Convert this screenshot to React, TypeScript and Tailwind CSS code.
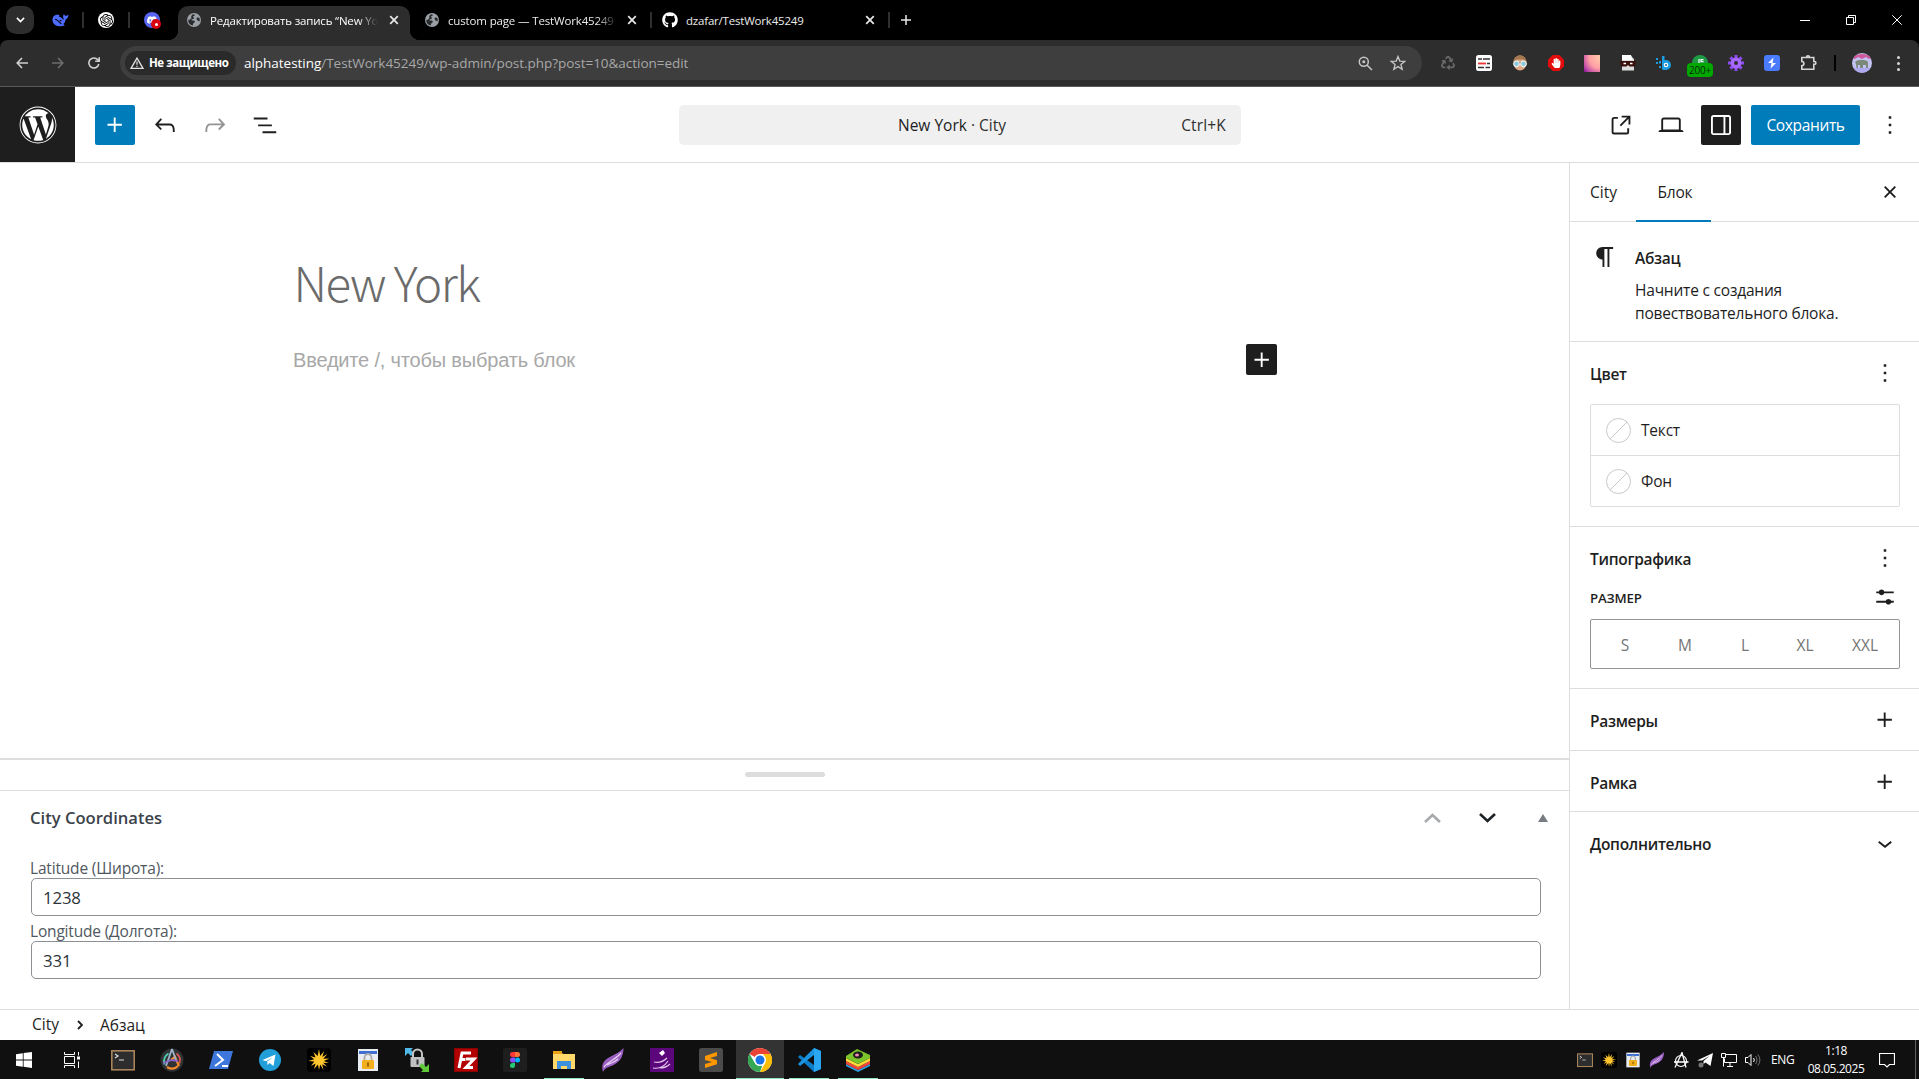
import React from "react";
import { FaGithub, FaWordpress, FaRecycle, FaHandPaper } from "react-icons/fa";
import { SiOpenai, SiDiscord } from "react-icons/si";

const UI = "font-['Open_Sans','Noto_Sans',sans-serif]";

/* ---------- editor icons (24-unit grid drawn at 30px) ---------- */

const WP = {
  plus: "M11 12.5V17.5H12.5V12.5H17.5V11H12.5V6H11V11H6V12.5H11Z",
  undo: "M18.3 11.7c-.6-.6-1.4-.9-2.3-.9H6.7l2.9-3.3-1.1-1-4.5 5L8.5 16l1-1-2.7-2.7H16c.5 0 .9.2 1.3.5 1 1 1 3.4 1 4.5v.3h1.5v-.2c0-1.5 0-4.3-1.5-5.7z",
  redo: "M15.6 6.5l-1.1 1 2.9 3.3H8c-.9 0-1.7.3-2.3.9-1.4 1.5-1.4 4.2-1.4 5.6v.2h1.5v-.3c0-1.1 0-3.5 1-4.5.3-.3.7-.5 1.3-.5h9.2L14.5 15l1.1 1.1 4.6-4.6-4.6-5z",
  list: "M3 6h11v1.5H3V6Zm3.5 5.5h11V13h-11v-1.5ZM21 17H10v1.5h11V17Z",
  external: "M19.5 4.5h-7V6h4.44l-5.97 5.97 1.06 1.06L18 7.06v4.44h1.5v-7Zm-13 1a2 2 0 0 0-2 2v10a2 2 0 0 0 2 2h10a2 2 0 0 0 2-2v-3H17v3a.5.5 0 0 1-.5.5h-10a.5.5 0 0 1-.5-.5v-10a.5.5 0 0 1 .5-.5h3V5.5h-3Z",
  desktop: "M20.5 16h-.7V8c0-1.1-.9-2-2-2H6.2c-1.1 0-2 .9-2 2v8h-.7c-.8 0-1.5.7-1.5 1.5h20c0-.8-.7-1.5-1.5-1.5zM5.7 8c0-.3.2-.5.5-.5h11.6c.3 0 .5.2.5.5v7.6H5.7V8z",
  drawer: "M18 4H6c-1.1 0-2 .9-2 2v12c0 1.1.9 2 2 2h12c1.1 0 2-.9 2-2V6c0-1.1-.9-2-2-2zm-4 14.5H6c-.3 0-.5-.2-.5-.5V6c0-.3.2-.5.5-.5h8v13zm4.5-.5c0 .3-.2.5-.5.5h-2.5v-13H18c.3 0 .5.2.5.5v12z",
  more: "M13 19h-2v-2h2v2zm0-6h-2v-2h2v2zm0-6h-2V5h2v2z",
  paragraph: "m9.99609 14v-.2251l.00391.0001v6.225h1.5v-14.5h2.5v14.5h1.5v-14.5h3v-1.5h-8.50391c-2.76142 0-5 2.23858-5 5 0 2.7614 2.23858 5 5 5z",
  close: "M12 13.06l3.712 3.713 1.061-1.06L13.061 12l3.712-3.712-1.06-1.06L12 10.938 8.288 7.227l-1.061 1.06L10.939 12l-3.712 3.712 1.06 1.061L12 13.061z",
  settings: "m19 7.5h-7.628c-.3089-.87389-1.1423-1.5-2.122-1.5-.97966 0-1.81309.62611-2.12197 1.5h-2.12803v1.5h2.12803c.30888.87389 1.14231 1.5 2.12197 1.5.9797 0 1.8131-.62611 2.122-1.5h7.628zm0 7.5h-2.128c-.3089-.8739-1.1423-1.5-2.122-1.5s-1.8131.6261-2.122 1.5h-7.628v1.5h7.628c.3089.8739 1.1423 1.5 2.122 1.5s1.8131-.6261 2.122-1.5h2.128z",
  chevron: "M17.5 11.6L12 16l-5.5-4.4.9-1.2L12 14l4.5-3.6 1 1.2z",
};

function Wp({ name, className = "" }: { name: keyof typeof WP; className?: string }) {
  return (
    <svg viewBox="0 0 24 24" className={`size-[30px] shrink-0 fill-current ${className}`}>
      <path d={WP[name]} />
    </svg>
  );
}

/* ---------- browser chrome ---------- */

function CloseX() {
  return (
    <svg viewBox="0 0 10 10" className="size-[10px] shrink-0">
      <path d="M1.2 1.2l7.6 7.6M8.8 1.2L1.2 8.8" stroke="#e8e8e8" strokeWidth="1.7" />
    </svg>
  );
}

const Globe = () => (
  <svg viewBox="0 0 14 14" className="size-[14px] shrink-0">
    <circle cx="7" cy="7" r="7" fill="#9aa0a6" />
    <path d="M6.2 1.2c1.2.3 2 .6 1.6 1.4-.6.6-1.6.4-1.8 1.2.2.8 1.2.4 1 1.4-.3.9-1.6.7-2.4 1.2-.6.8.4 1.2 1.4 1.1 1 0 1.8.5 1.9 1.3-.3.9-1.5 1.1-1.8 2.1l-.4 1.7A5.8 5.8 0 0 1 1.300 6.500l1.500.4c.5-1.200 1.400-1.200 1.600-2 .2-1-.6-1.200.1-2.200.4-.7 1-1.200 1.700-1.500zM9.800 4.800c.8-.6 1.900-.4 2.700.3.300 1 .4 2.200 0 3.300-.7-.3-1.300-.2-1.900-.8-.6-.8-1.500-1.800-.8-2.800z" fill="#2a2b2d" />
  </svg>
);

const Sep = ({ className = "" }: { className?: string }) => (
  <div className={`h-4 w-[2px] shrink-0 bg-[#2f2f2f] ${className}`} />
);

function TabStrip() {
  return (
    <div className="flex h-10 items-center bg-black pl-[6px] text-[11.500px] text-[#ececec]">
      <div className="flex size-7 items-center justify-center rounded-[10px] bg-[#2d2d2d]">
        <svg viewBox="0 0 10 6" className="w-[9px]">
          <path d="M1 1l4 4 4-4" fill="none" stroke="#fff" strokeWidth="1.8" />
        </svg>
      </div>
      <svg viewBox="0 0 17 14" className="ml-[18px] h-[14px] w-[17px]">
        <path d="M0.500 7C0.500 3 4 1 7.500 2.200l-.6 1.300c1.800.4 2.800 1.300 3.900 2.800l1.300.2c-1.300-1.500-1.400-3.400-.2-5.400l.9 1.500c1.200.5 2.700.1 3.800-1-.1 2.700-1.200 4.400-3 4.900-.3 2.100-1 3.500-2.300 4.500l1.500 1.600C7 14.500.500 12.500.5 7z" fill="#4d6bfe" />
        <path d="M3 6.200c2.300.2 4.300 2.700 6.300 4.800M7.800 7.300l1.700.8" stroke="#000" strokeWidth="1.100" fill="none" />
      </svg>
      <Sep className="ml-[13px]" />
      <div className="ml-[14px] flex size-4 items-center justify-center rounded-full bg-white">
        <SiOpenai className="size-[13px] text-black" />
      </div>
      <Sep className="ml-[14px]" />
      <div className="relative ml-[14px] flex size-4 items-center justify-center rounded-full bg-[#5865f2]">
        <SiDiscord className="size-[10px] text-white" />
        <div className="absolute -right-[1px] -bottom-[1px] flex size-[10px] items-center justify-center rounded-full bg-[#d9000d]">
          <div className="size-[3px] rounded-full bg-white" />
        </div>
      </div>

      <div className="relative ml-[18px] flex h-[34px] w-[232px] items-center self-end rounded-t-[10px] bg-[#2d2d2d] pl-[9px] before:absolute before:bottom-0 before:-left-[10px] before:size-[10px] before:bg-[radial-gradient(circle_at_0_0,transparent_10px,#2d2d2d_10.500px)] after:absolute after:-right-[10px] after:bottom-0 after:size-[10px] after:bg-[radial-gradient(circle_at_100%_0,transparent_10px,#2d2d2d_10.500px)]">
        <div className="-mt-[6px] flex items-center">
          <Globe />
          <div className="ml-[9px] w-[168px] overflow-hidden pt-px tracking-[-0.180px] whitespace-nowrap text-white [mask-image:linear-gradient(90deg,#000_148px,transparent_168px)]">
            Редактировать запись “New York
          </div>
          <div className="ml-[11px]"><CloseX /></div>
        </div>
      </div>

      <div className="ml-[15px] flex items-center">
        <Globe />
        <div className="ml-[9px] w-[168px] overflow-hidden pt-px tracking-[-0.150px] whitespace-nowrap [mask-image:linear-gradient(90deg,#000_148px,transparent_170px)]">
          custom page — TestWork45249
        </div>
        <div className="ml-[11px]"><CloseX /></div>
      </div>
      <Sep className="ml-[13px]" />
      <FaGithub className="ml-[10px] size-4 text-white" />
      <div className="ml-[8px] w-[179px] pt-px tracking-[-0.200px]">dzafar/TestWork45249</div>
      <CloseX />
      <Sep className="ml-[13px]" />
      <svg viewBox="0 0 10 10" className="ml-[11px] size-[10px]">
        <path d="M5 0v10M0 5h10" stroke="#e8e8e8" strokeWidth="1.500" />
      </svg>

      <div className="ml-auto flex items-center">
        <div className="flex w-[46px] justify-center"><div className="h-px w-[10px] bg-white" /></div>
        <div className="flex w-[46px] justify-center">
          <svg viewBox="0 0 10 10" className="size-[10px]">
            <path d="M.5 2.500h7v7h-7zM2.500 2.500v-2h7v7h-2" fill="none" stroke="#fff" />
          </svg>
        </div>
        <div className="flex w-[45px] justify-center">
          <svg viewBox="0 0 10 10" className="size-[10px]">
            <path d="M.3.3l9.400 9.400M9.700.3L.3 9.700" stroke="#fff" />
          </svg>
        </div>
      </div>
    </div>
  );
}

const Ext = ({ children }: { children: React.ReactNode }) => (
  <div className="relative flex h-5 w-9 shrink-0 items-center justify-center">{children}</div>
);

function Toolbar() {
  return (
    <div className="bg-black">
      <div className="flex h-[47px] items-center rounded-t-[8px] border-b border-[#5a5a5a] bg-[#2d2d2d] pl-1">
        <div className="flex w-9 shrink-0 justify-center">
          <svg viewBox="0 0 12 12" className="size-3"><path d="M12 6H1.200M6 1L1.200 6 6 11" fill="none" stroke="#d0d0d0" strokeWidth="1.600" /></svg>
        </div>
        <div className="flex w-9 shrink-0 justify-center">
          <svg viewBox="0 0 12 12" className="size-3"><path d="M0 6h10.800M6 1l4.800 5L6 11" fill="none" stroke="#6e6e6e" strokeWidth="1.600" /></svg>
        </div>
        <div className="flex w-9 shrink-0 justify-center">
          <svg viewBox="0 0 12 12" className="size-3"><path d="M10.800 7A5 5 0 1 1 9.800 2.800L11 4.200M11.200.3v4H7.200" fill="none" stroke="#d0d0d0" strokeWidth="1.600" /></svg>
        </div>
        <div className="ml-[8px] flex h-[34px] w-[1302px] shrink-0 items-center rounded-full bg-[#3e3e3e] pl-[5px]">
          <div className="flex h-6 w-[111px] shrink-0 items-center rounded-full bg-[#2a2a2a] pl-[5px]">
            <svg viewBox="0 0 14 12" className="h-3 w-[14px] shrink-0">
              <path d="M7 1.100L13 11.300H1z" fill="none" stroke="#e3e3e3" strokeWidth="1.300" />
              <path d="M7 4.500v3.300M7 8.700v1.300" stroke="#e3e3e3" strokeWidth="1.200" />
            </svg>
            <span className="ml-[5px] text-[11.500px] font-bold tracking-[-0.450px] whitespace-nowrap text-white">Не защищено</span>
          </div>
          <div className="ml-[8px] text-[13.500px] tracking-[-0.030px] whitespace-nowrap text-[#a8a8a8]">
            <span className="text-white">alphatesting</span>/TestWork45249/wp-admin/post.php?post=10&amp;action=edit
          </div>
          <div className="mr-[16px] ml-auto flex items-center gap-[17px]">
            <svg viewBox="0 0 15 15" className="size-[15px]" fill="none" stroke="#c7c7c7" strokeWidth="1.500">
              <circle cx="5.800" cy="5.800" r="4.500" /><path d="M9 9l5 5" /><circle cx="5.800" cy="5.800" r="1.500" fill="#c7c7c7" stroke="none" />
            </svg>
            <svg viewBox="0 0 16 16" className="size-4" fill="none" stroke="#c7c7c7" strokeWidth="1.300">
              <path d="M8 1.500l1.800 4.600 4.900.3-3.800 3.100 1.300 4.800L8 11.600l-4.200 2.700 1.300-4.800L1.300 6.400l4.900-.3z" />
            </svg>
          </div>
        </div>
        <div className="ml-2 flex items-center">
          <Ext>
            <FaRecycle className="size-[14px] text-[#696969]" />
          </Ext>
          <Ext>
            <svg viewBox="0 0 16 16" className="size-4">
              <rect width="16" height="16" rx="2.500" fill="#fff" />
              <path d="M2 4h4M7 4h7M2 12.500h6M9.500 12.500h4.500" stroke="#333" strokeWidth="1.600" />
              <path d="M2 8.500h8" stroke="#e33" strokeWidth="1.800" /><path d="M11 8.500h3" stroke="#333" strokeWidth="1.600" />
            </svg>
          </Ext>
          <Ext>
            <svg viewBox="0 0 16 16" className="size-4">
              <ellipse cx="8" cy="8" rx="6.500" ry="7.500" fill="#e0a884" />
              <path d="M1.300 7C1.500 2.500 5 .3 8 .3s6.500 2.200 6.700 6.700L11 4.500H5z" fill="#a5794f" />
              <path d="M.5 8h15" stroke="#4d4438" strokeWidth="1.600" />
              <circle cx="4.500" cy="8.800" r="2.900" fill="#8fcadb" stroke="#fff" /><circle cx="11.500" cy="8.800" r="2.900" fill="#8fcadb" stroke="#fff" />
            </svg>
          </Ext>
          <Ext>
            <svg viewBox="0 0 16 16" className="size-4"><path d="M4.700 0h6.600L16 4.700v6.600L11.300 16H4.700L0 11.300V4.700z" fill="#e40d0d" /></svg>
            <FaHandPaper className="absolute size-[10px] text-white" />
          </Ext>
          <Ext><div className="h-[17px] w-4 bg-[radial-gradient(circle_at_100%_15%,#ffc9a8,#ff9fa5_50%,#c34fa6_80%,#7a129c)]" /></Ext>
          <Ext>
            <svg viewBox="0 0 16 16" className="size-4">
              <path d="M2 1h9l3 3v11.500H2z" fill="#dcdcdc" /><path d="M2 0h9l1.500 5H2z" fill="#fff" />
              <path d="M0 6h16l-1 5.500H9.500L8 10l-1.500 1.500H1z" fill="#3a100c" />
              <path d="M3.500 8.500h2.500M10 8.500h2.500" stroke="#fff" strokeWidth="1.400" />
            </svg>
          </Ext>
          <Ext>
            <svg viewBox="0 0 16 14" className="h-[14px] w-4">
              <g fill="#1b9be0"><path d="M6 0h2.500v4h1.500a5 5 0 1 1 0 10H7.500C6 14 6 13 6 12z" /><rect x="0" y="2" width="2" height="2" /><rect x="3" y="5" width="2" height="2.500" /><rect x="0" y="6" width="2" height="2" /><rect x="3" y="10" width="2" height="2" /></g>
              <circle cx="10" cy="9" r="2.300" fill="#fff" /><circle cx="10" cy="9" r="1.100" fill="#1b6ea8" />
            </svg>
          </Ext>
          <Ext>
            <div className="flex size-4 items-start justify-center rounded-full bg-[#1f9a43]">
              <svg viewBox="0 0 8 5" className="mt-[4px] h-[5px] w-2" fill="none" stroke="#fff" strokeWidth="1.200"><path d="M3 0v5M7.500.6H5v2h2.500" /></svg>
            </div>
            <div className="absolute top-[10px] left-[5px] flex h-[14px] w-[26px] items-center justify-center rounded-[4px] bg-[#00a800] text-[10px] tracking-[-0.200px] text-[#062b06]">200+</div>
          </Ext>
          <Ext>
            <svg viewBox="0 0 16 16" className="size-4">
              <g stroke="#8d4bf0" strokeWidth="3"><path d="M8 0v16M0 8h16M2.400 2.400l11.200 11.200M13.600 2.400L2.400 13.600" /></g>
              <circle cx="8" cy="8" r="5.500" fill="#a667ff" /><circle cx="8" cy="8" r="2" fill="#2d2d2d" />
            </svg>
          </Ext>
          <Ext>
            <svg viewBox="0 0 16 16" className="size-4"><rect width="16" height="16" rx="3" fill="#4a7bff" /><path d="M9.500 2.500L4 8h3.500l-1 5.500L12 8H8.500z" fill="#fff" /></svg>
          </Ext>
          <Ext>
            <svg viewBox="0 0 17 17" className="-mt-[2px] size-[17px]"><path d="M1.800 3.500h12v4h.7a1.400 1.400 0 0 1 0 2.800h-.7v5H1.800v-3.600a2 2 0 0 0 0-4.200zM6.500 3.200a1.500 1.500 0 0 1 3 0" fill="none" stroke="#d6d6d6" strokeWidth="1.600" /></svg>
          </Ext>
        </div>
        <div className="ml-2 h-4 w-[2px] bg-black" />
        <div className="ml-4 size-5 overflow-hidden rounded-full">
          <svg viewBox="0 0 20 20" className="size-5">
            <rect width="20" height="20" fill="#c3c3f2" />
            <path d="M0 5c3-3 6-4 10-4s8 1 10 4l-3 1-3-2-4 2-4-2-3 2z" fill="#cf5a9b" />
            <path d="M3 9c2-2 5-2 7-2s6 0 6 3v5h-2v-3h-3v3H8v-3H6v3H4.500l-.5-4z" fill="#7b8a78" />
            <path d="M1 15h18v5H1z" fill="#a7a0ee" opacity=".7" />
          </svg>
        </div>
        <div className="flex w-[47px] flex-col items-center gap-[3px] pl-[5px]">
          <div className="size-[3px] rounded-full bg-[#d6d6d6]" /><div className="size-[3px] rounded-full bg-[#d6d6d6]" /><div className="size-[3px] rounded-full bg-[#d6d6d6]" />
        </div>
      </div>
    </div>
  );
}

/* ---------- editor ---------- */

function EditorHeader() {
  return (
    <header className="flex h-[76px] border-b border-[#ddd] bg-white text-[15.500px] text-[#1e1e1e]">
      <div className="flex w-[75px] items-center justify-center bg-[#1e1e1e]">
        <FaWordpress className="size-[38px] text-white" />
      </div>
      <div className="flex w-[604px] items-center pl-5">
        <div className="flex size-10 items-center justify-center rounded-[2px] bg-[#007cba]"><Wp name="plus" className="text-white" /></div>
        <Wp name="undo" className="ml-[15px]" />
        <Wp name="redo" className="ml-5 text-[#949494]" />
        <Wp name="list" className="ml-5" />
      </div>
      <div className="mt-[18px] grid h-10 w-[562px] grid-cols-[219px_1fr_auto] items-center rounded-[5px] bg-[#f0f0f0] pt-px pr-[15px]">
        <span />
        <span className="whitespace-nowrap">New York <span className="text-[#2f2f2f]">· City</span></span>
        <span className="tracking-[0.150px] text-[#2f2f2f]">Ctrl+K</span>
      </div>
      <div className="ml-auto flex items-center">
        <Wp name="external" />
        <Wp name="desktop" className="ml-5" />
        <div className="ml-[15px] flex size-10 items-center justify-center rounded-[2px] bg-[#1e1e1e]"><Wp name="drawer" className="text-white" /></div>
        <div className="ml-[10px] flex h-10 w-[109px] items-center justify-center rounded-[2px] bg-[#007cba] pt-[3px] tracking-[-0.350px] text-white">Сохранить</div>
        <Wp name="more" className="mr-[14px] ml-[15px]" />
      </div>
    </header>
  );
}

function Field({ label, value }: { label: string; value: string }) {
  return (
    <div className="h-[63px]">
      <div className="h-[18px] text-[15.500px] leading-[17px] tracking-[-0.180px] text-[#50575e]">{label}</div>
      <div className="ml-px flex h-[38px] w-[1510px] items-center rounded-[5px] border border-[#8c8f94] pt-[2px] pl-[11px] text-[16.800px] tracking-[-0.150px] text-[#2c3338]">{value}</div>
    </div>
  );
}

function Canvas() {
  return (
    <div className="flex w-[1569px] flex-col">
      <div className="h-[595px] pt-[87px] pl-[294px]">
        <h1 className="-ml-[0.500px] h-[64px] font-['Noto_Sans_CJK_SC',sans-serif] text-[47.500px] leading-[64px] font-light tracking-[-1.600px] text-[#6b6b6b]">New York</h1>
        <div className="-ml-px mt-[30px] flex h-[31px] w-[984px] items-center justify-between font-['Liberation_Sans',sans-serif] text-[20px] text-[#a8a8a8]">
          <span className="tracking-[-0.180px] whitespace-nowrap">Введите /, чтобы выбрать блок</span>
          <div className="flex size-[31px] items-center justify-center rounded-[2px] bg-[#1e1e1e]"><Wp name="plus" className="text-white" /></div>
        </div>
      </div>
      <div className="flex h-[32px] justify-center border-t-2 border-[#ddd] pt-[12px]"><div className="h-[5px] w-20 rounded-full bg-[#ddd]" /></div>
      <div className="h-[219px] border-t border-[#ddd]">
        <div className="flex h-[55px] items-center pl-[30px]">
          <h2 className="text-[16.600px] font-semibold text-[#3c434a]">City Coordinates</h2>
          <div className="mr-[21px] -mt-px ml-auto flex items-center">
            <svg viewBox="0 0 17 10" className="h-[10px] w-[17px]"><path d="M1 9l7.500-7L16 9" fill="none" stroke="#a7aaad" strokeWidth="2.600" /></svg>
            <svg viewBox="0 0 17 10" className="ml-[38px] h-[10px] w-[17px]"><path d="M1 1l7.500 7L16 1" fill="none" stroke="#1d2327" strokeWidth="2.600" /></svg>
            <svg viewBox="0 0 10 8" className="ml-[42px] h-2 w-[10px]"><path d="M5 0l5 8H0z" fill="#787c82" /></svg>
          </div>
        </div>
        <div className="pt-[14px] pl-[30px]">
          <Field label="Latitude (Широта):" value="1238" />
          <Field label="Longitude (Долгота):" value="331" />
        </div>
      </div>
    </div>
  );
}

function NoColor({ label, first }: { label: string; first?: boolean }) {
  return (
    <div className={`flex items-center pl-[15px] ${first ? "h-[50px]" : "h-[51px] border-t border-[#ddd]"}`}>
      <svg viewBox="0 0 25 25" className="size-[25px]" fill="none" stroke="#c8c8c8"><circle cx="12.500" cy="12.500" r="12" /><path d="M4.200 20.800L21 4" /></svg>
      <span className="ml-[10px] pt-[2px]">{label}</span>
    </div>
  );
}

function PanelTitle({ text, icon }: { text: string; icon: keyof typeof WP }) {
  return (
    <div className="flex h-[30px] items-center justify-between">
      <h3 className="pt-[3px] font-semibold tracking-[-0.300px]">{text}</h3>
      <Wp name={icon} />
    </div>
  );
}

function Sidebar() {
  return (
    <aside className="flex-1 border-l border-[#ddd] text-[15.500px] tracking-[-0.200px] text-[#1e1e1e]">
      <div className="flex h-[59px] items-center border-b border-[#ddd]">
        <div className="w-[66px] pt-px pl-5 tracking-normal">City</div>
        <div className="mt-px flex h-[59px] w-[75px] items-center justify-center border-b-2 border-[#007cba] pt-[2px] pl-[3px]">Блок</div>
        <Wp name="close" className="mr-[14px] ml-auto" />
      </div>
      <div className="flex h-[120px] border-b border-[#ddd] pt-5 pl-5">
        <Wp name="paragraph" />
        <div className="ml-[15px] pt-[5px]">
          <h2 className="leading-[22px] font-semibold tracking-[-0.300px]">Абзац</h2>
          <p className="mt-[10px] leading-[23px] whitespace-nowrap">Начните с создания<br />повествовательного блока.</p>
        </div>
      </div>
      <div className="h-[185px] border-b border-[#ddd] pt-4 pr-[19px] pl-5">
        <PanelTitle text="Цвет" icon="more" />
        <div className="mt-[16px] h-[103px] rounded-[2px] border border-[#ddd]">
          <NoColor label="Текст" first />
          <NoColor label="Фон" />
        </div>
      </div>
      <div className="h-[162px] border-b border-[#ddd] pt-4 pr-[19px] pl-5">
        <PanelTitle text="Типографика" icon="more" />
        <div className="mt-[9px] flex h-[30px] items-center justify-between">
          <span className="pt-[4px] text-[13.250px] font-semibold tracking-[-0.200px]">РАЗМЕР</span>
          <Wp name="settings" />
        </div>
        <div className="mt-[7px] grid h-[50px] grid-cols-5 items-center rounded-[2px] border border-[#949494] px-[4px] pt-[3px] text-center tracking-normal text-[#757575]">
          <span>S</span><span>M</span><span>L</span><span>XL</span><span>XXL</span>
        </div>
      </div>
      <div className="h-[62px] border-b border-[#ddd] pt-4 pr-[19px] pl-5"><PanelTitle text="Размеры" icon="plus" /></div>
      <div className="h-[61px] border-b border-[#ddd] pt-4 pr-[19px] pl-5"><PanelTitle text="Рамка" icon="plus" /></div>
      <div className="pt-4 pr-[19px] pl-5"><PanelTitle text="Дополнительно" icon="chevron" /></div>
    </aside>
  );
}

/* ---------- taskbar ---------- */

const S = ({ children, n = 24, c = "size-6" }: { children: React.ReactNode; n?: number; c?: string }) => (
  <svg viewBox={`0 0 ${n} ${n}`} className={c}>{children}</svg>
);

const Terminal = ({ c }: { c?: string }) => (
  <S c={c}><rect x=".8" y="2.800" width="22.400" height="19" fill="#2d2d2d" stroke="#a8835a" strokeWidth="1.600" /><path d="M4 6l3 2-3 2M8 12h5" stroke="#ddd" fill="none" strokeWidth="1.200" /></S>
);

const Burst = ({ c }: { c?: string }) => (
  <S c={c}>
    <rect width="24" height="24" rx="4" fill="#000" />
    <path d="M12 1l1.200 7L17 3l-1.700 6 5-3-4 4.800 6-.3-5.500 2.500 5 2-5.600-.2 4 4-5-2.500L16.500 22l-3.300-5.500L12 22l-1-5.500L7 21l1.600-5.600L4 18l3.300-4.400L1.500 13l5.700-1.700L3 8l5.500 1.500L6.500 4 10.700 8z" fill="#ffc62e" />
  </S>
);

const LockDoc = ({ c }: { c?: string }) => (
  <S c={c}><rect x="2" y="1" width="20" height="22" fill="#e9edf2" /><rect x="3" y="3" width="18" height="3" fill="#3f6fd0" /><path d="M8.500 12v-2.500a3.500 3.500 0 0 1 7 0V12" fill="none" stroke="#a9a9a9" strokeWidth="1.800" /><rect x="6" y="12" width="12" height="9" rx="1" fill="#f2b01e" /><rect x="11" y="14.500" width="2" height="4" fill="#9b6500" /></S>
);

const Feather = ({ c }: { c?: string }) => (
  <S c={c}><path d="M22.500 0c0 9-4 14-10 17-4 2-8.500 2.500-10.500 7C0 17 2 13 8 9.500 13 6.500 18 5 22.500 0z" fill="#9a5fc0" /><path d="M20 5C15 11 8 13 3 19M17 11c-4 4-8 4-11 6" stroke="#e6d0f5" strokeWidth="1.200" fill="none" /></S>
);

const taskIcons: { el: React.ReactNode; line?: string; active?: boolean }[] = [
  { el: <Terminal /> },
  { el: <S><circle cx="12" cy="12" r="11.500" fill="#303234" /><path d="M4.500 16.500a9 9 0 0 1 4-11" stroke="#4fd3b5" strokeWidth="1.800" fill="none" /><path d="M16.500 5.500a9 9 0 0 1 3 10" stroke="#e25b52" strokeWidth="1.600" fill="none" /><path d="M7 19c4 2.500 8 2 11-1M11 12l4-3 4 9" stroke="#f58b2a" strokeWidth="2.200" fill="none" /><path d="M12 1L6 18M12 1l4 11" stroke="#9fb4c9" strokeWidth="1.800" fill="none" /><path d="M3 15l9-3 6 1" stroke="#8a62c9" strokeWidth="1.800" fill="none" /></S> },
  { el: <S><path d="M5 3h19l-5 18H0z" fill="#3d77dc" /><path d="M8 6l6 6-8 6M13 18h6" fill="none" stroke="#fff" strokeWidth="2" /></S> },
  { el: <S><circle cx="12" cy="12" r="11" fill="#229ed9" /><path d="M4.500 12L17.500 6.500 15.500 18l-4-3-2 2-.3-3.600L15 9l-7 4.200z" fill="#fff" /></S> },
  { el: <Burst /> },
  { el: <LockDoc /> },
  { el: <S><path d="M0 0h8L6 2l3 3-3 3-3-3-3 3z" fill="#4fb8e8" /><path d="M8 11V6a4.500 4.500 0 0 1 9 0v5" fill="none" stroke="#c4c4c4" strokeWidth="2" /><rect x="5.500" y="9" width="14" height="10" rx="1" fill="#bfc1c3" /><rect x="11.500" y="11.500" width="2" height="5" fill="#333" /><path d="M24 24h-8l2-2-4-4 3-3 4 4 3-3z" fill="#5fc93a" /></S> },
  { el: <S><rect width="24" height="24" fill="#b30000" /><rect x=".5" y=".5" width="23" height="23" fill="none" stroke="#5e0000" strokeDasharray="1 1" /><path d="M5 20L8 5h9M6.500 11.500h5M12 11h8l-8 8.500h7" fill="none" stroke="#fff" strokeWidth="3" /></S> },
  { el: <S><rect width="24" height="24" rx="2" fill="#1e1e1e" /><path d="M9.500 4H12v5H9.500a2.500 2.500 0 0 1 0-5z" fill="#ff3737" /><path d="M12 4h2.500a2.500 2.500 0 0 1 0 5H12z" fill="#ff7237" /><path d="M9.500 9.500H12v5H9.500a2.500 2.500 0 0 1 0-5z" fill="#874fff" /><circle cx="14.500" cy="12" r="2.500" fill="#00b6ff" /><path d="M9.500 15H12v2.500A2.500 2.500 0 1 1 9.500 15z" fill="#24cb71" /></S> },
  { line: "w-10", el: <S><path d="M1 4h8l2 2h12v15H1z" fill="#ffd869" /><path d="M1 3h9v3H1z" fill="#e7a216" /><path d="M5 21v-8h14v8h-4v-3H9v3z" fill="#3e92dd" /></S> },
  { el: <Feather /> },
  { el: <S><rect width="24" height="24" fill="#5c067c" /><path d="M9 5l4-3 2 3-3 3z" fill="#fff" /><path d="M4 14c5 1 9 0 13-4M3 20c6 1 11-1 15-7M10 20c4 0 7-1 10-4" stroke="#e0c4ea" strokeWidth="1.200" fill="none" /></S> },
  { el: <S><rect width="24" height="24" rx="2.500" fill="#4b4b4b" /><path d="M6 8l12-4v4l-7 2 7 2.200v4L6 20v-4l7-2-7-2z" fill="#ff9800" /></S> },
  { active: true, line: "w-12", el: (
    <S><circle cx="12" cy="12" r="12" fill="#fff" /><path d="M12 0a12 12 0 0 1 10.400 6H12a6 6 0 0 0-5.200 3L1.600 6A12 12 0 0 1 12 0z" fill="#ea4335" /><path d="M22.400 6A12 12 0 0 1 12 24l5.200-9a6 6 0 0 0 0-6L15 6z" fill="#fbbc04" /><path d="M12 24A12 12 0 0 1 1.600 6l5.200 9a6 6 0 0 0 7.500 2.600L12 24z" fill="#34a853" /><circle cx="12" cy="12" r="5.500" fill="#fff" /><circle cx="12" cy="12" r="4.500" fill="#1a73e8" /></S>
  ) },
  { line: "w-10", el: <S><path d="M17 0l7 3v18l-7 3L1 9l2-2 14 10z" fill="#0d7cc9" /><path d="M17 0v7L3 18l-2-2z" fill="#1a94e0" /><path d="M17 0l7 3v18l-7 3z" fill="#2aa7f2" /></S> },
  { line: "w-10", el: <S><path d="M0 16l12 6 12-6v2l-12 6L0 18z" fill="#2aa1e0" /><path d="M0 13l12 6 12-6v3l-12 6-12-6z" fill="#f2463c" /><path d="M0 10l12 6 12-6v3l-12 6-12-6z" fill="#ffd83a" /><path d="M0 8l11-7 13 6v3l-12 6L0 10z" fill="#7cc42c" /><ellipse cx="12" cy="7" rx="5" ry="3.500" fill="#1c1c1c" /><ellipse cx="11" cy="7" rx="2" ry="1.500" fill="#f08bb4" /></S> },
];

function Taskbar() {
  return (
    <footer className="flex h-[39px] items-center bg-[#101010] text-[12px] text-white">
      <div className="flex w-12 justify-center">
        <S n={16} c="size-4"><path d="M0 2.200l6.800-1v6.300H0zM7.600 1.100L16 0v7.500H7.600zM0 8.400h6.800v6.300l-6.800-1zM7.600 8.400H16V16l-8.400-1.200z" fill="#fff" /></S>
      </div>
      <div className="mr-[3px] flex w-12 justify-center">
        <S n={16} c="size-4"><path d="M.5 0v2.500h10V0M.5 16v-2.500h10V16M.5 4.500h10v7H.5zM14.500 0v3.500M14.500 9.500V16" fill="none" stroke="#fff" /><rect x="13" y="4.500" width="3" height="3" fill="#fff" /></S>
      </div>
      <div className="flex gap-px">
        {taskIcons.map((t, i) => (
          <div key={i} className={`relative flex h-[39px] w-12 items-center justify-center ${t.active ? "bg-[#333]" : ""}`}>
            {t.el}
            {t.line && <div className={`absolute bottom-0 h-px bg-[#93e6c3] ${t.line}`} />}
          </div>
        ))}
      </div>
      <div className="ml-auto flex items-center">
        <div className="flex w-6 justify-center"><Terminal c="size-4" /></div>
        <div className="flex w-6 justify-center"><Burst c="size-4" /></div>
        <div className="flex w-6 justify-center"><LockDoc c="size-4" /></div>
        <div className="flex w-6 justify-center"><Feather c="size-4" /></div>
        <div className="flex w-6 justify-center"><S n={16} c="size-4"><circle cx="8" cy="9" r="5.500" fill="none" stroke="#fff" strokeWidth="1.200" /><path d="M2 15.500L9 .5l4 15M1 10h14.500" fill="none" stroke="#fff" strokeWidth="1.300" /></S></div>
        <div className="flex w-6 justify-center"><S n={16} c="size-4"><path d="M0 8.500L16 1l-2.500 13-5-3.500-2 1.500V9l6-5-7.500 4.500z" fill="#fff" /><circle cx="4" cy="13" r="2.500" fill="#777" /></S></div>
        <div className="flex w-6 justify-center"><S n={16} c="size-4"><path d="M5 2.500h10.500v8H3.500v-4M.5 1.500h4v4h-4zM2.500 5.500v9M6 14.500h6M9 10.500v4" fill="none" stroke="#fff" /></S></div>
        <div className="flex w-6 justify-center"><S n={16} c="size-4"><path d="M.5 5.500h2.500l3-3v11l-3-3H.5z" fill="none" stroke="#fff" /><path d="M8.500 6a3 3 0 0 1 0 4" fill="none" stroke="#fff" /><path d="M10.500 4a6 6 0 0 1 0 8M12.800 2.500a9 9 0 0 1 0 11" fill="none" stroke="#777" /></S></div>
        <div className="ml-[6px] w-6 tracking-[-0.400px]">ENG</div>
        <div className="ml-[12px] w-[58px] text-center leading-[18px] tracking-[-0.450px]"><div>1:18</div><div>08.05.2025</div></div>
        <S n={16} c="ml-[14px] size-4"><path d="M.5 1.500h15v11h-5l-2.500 2.500-2.500-2.500h-5z" fill="none" stroke="#fff" strokeWidth="1.200" /></S>
        <div className="ml-5 h-[39px] w-px bg-[#5f5f5f]" />
        <div className="w-[3px]" />
      </div>
    </footer>
  );
}

export default function App() {
  return (
    <div className={`flex h-[1079px] w-[1919px] flex-col overflow-hidden bg-white ${UI}`}>
      <TabStrip />
      <Toolbar />
      <EditorHeader />
      <div className="flex h-[846px]">
        <Canvas />
        <Sidebar />
      </div>
      <div className="flex h-[31px] items-center border-t border-[#ddd] pl-8 text-[15.500px] text-[#1e1e1e]">
        <span className="w-[45px]">City</span>
        <svg viewBox="0 0 6 10" className="h-[10px] w-[6px]"><path d="M1 1l4 4-4 4" fill="none" stroke="#1e1e1e" strokeWidth="1.800" /></svg>
        <span className="ml-[17px] pt-[2px]">Абзац</span>
      </div>
      <Taskbar />
    </div>
  );
}
